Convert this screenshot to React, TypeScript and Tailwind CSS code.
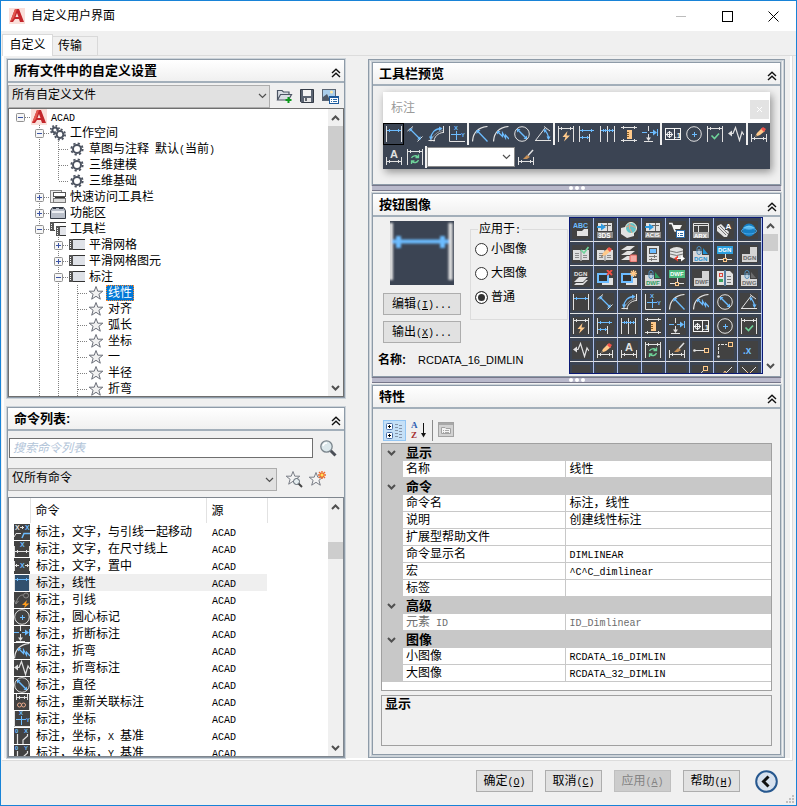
import React, { Fragment, type ReactNode } from "react";
import clsx from "clsx";

const W = "#e2e2e2";
const B = "#6cbcff";
const O = "#ffc98a";
const G = "#6fd49a";

const glyph = (x: number, y: number, s: string, fill: string, size = 6) => (
  <text x={x} y={y} fill={fill} stroke="none" fontSize={size} fontWeight="700" fontFamily="Liberation Sans, sans-serif">
    {s}
  </text>
);

const extLines = (
  <>
    <path d="M0.500 8V16M15.500 8V16" stroke={W} />
    <path d="M1 12.500H15M3.500 11V14M12.500 11V14" stroke={W} />
  </>
);

const topExtLines = <path d="M0.500 0V16M15.500 0V16M1 2.500H15M3.500 1V4M12.500 1V4" stroke={W} />;

const clip = (label: string, color: string) => (
  <>
    <path d="M0 5H9V9H16V16H0Z" fill="#d8d8d8" stroke="none" />
    <path d="M10 2L15 8H10Z" fill={color} stroke="none" />
    <rect x="4" y="0.500" width="4" height="8" rx="2" stroke="#4d8fc0" />
    <path d="M6 3V7" stroke="#9cc9ea" />
    {glyph(1, 15, label, color, 6)}
  </>
);

const net = (label: string, color: string) => (
  <>
    <rect x="0" y="0" width="16" height="8" fill={color} stroke="none" />
    {glyph(1, 6, label, "#fff", 6)}
    <path d="M8.500 8V12M1 13.500H15" stroke={W} />
    <rect x="6.500" y="12.500" width="3" height="3" fill="#444" stroke={O} />
  </>
);

const docIcon = (label: string) => (
  <>
    <path d="M9 1H16V16H1V8H9Z" fill="#d4d4d4" stroke="none" />
    {glyph(2, 14, label, "#666", 6)}
  </>
);

const book = (
  <>
    <path d="M0 4H7L8 5L9 4H16V14H9L8 15L7 14H0Z" fill="#dedede" stroke="none" />
    <path d="M8 5V14M2 7.500H6M2 9.500H6M2 11.500H6M10 9.500H14M10 11.500H14" stroke="#8a8a8a" />
  </>
);

const pencil = (
  <>
    <path d="M4 11L6 7L11 2L14 5L9 9Z" fill={O} stroke="none" />
    <path d="M10 3L12 1L15 3L13 6Z" fill="#f0524a" stroke="none" />
    <path d="M4 11L5 9L6.500 10Z" fill="#555" stroke="none" />
  </>
);

const icons: Record<string, ReactNode> = {
  linear: (
    <>
      <path d="M0.500 0V16M15.500 0V16" stroke={W} />
      <path d="M1 4.500H15M3.500 3V6M2.500 4V5M12.500 3V6M13.500 4V5" stroke={B} />
    </>
  ),
  aligned: (
    <>
      <path d="M0.500 5L6 0.500M10.500 15.500L15.500 10.500" stroke={W} />
      <path d="M3 3L13 13" stroke={B} strokeWidth="1.300" />
      <path d="M2.500 2.500H6L2.500 6ZM13.500 13.500H10L13.500 10Z" fill={B} />
    </>
  ),
  arc: (
    <>
      <path d="M6 15.500C6 11 10 7 15 6.500M0.500 14.500H7M15.500 0V7" stroke={W} />
      <path d="M3 15.500C3 11 10 4.500 16 4.500" stroke={W} opacity=".5" />
      <path d="M2.500 13.500C3 7 7 2.500 13.500 2.500" stroke={B} strokeWidth="1.300" />
      <path d="M1 10.500H5L2.500 14ZM11 0.500V5L14.500 2.500Z" fill={B} />
    </>
  ),
  ordinate: (
    <>
      <path d="M0.500 0V15.500H16" stroke={W} />
      <path d="M7.500 5V14M2 8.500H12" stroke={B} />
      {glyph(5, 4, "X", B, 6)}
      {glyph(12, 11, "Y", B, 6)}
    </>
  ),
  radius: (
    <>
      <path d="M0.500 15.500C1 7 6 1.500 15.500 0.500" stroke={W} strokeWidth="1.200" />
      <path d="M5 4.500L15.500 15.500" stroke={B} strokeWidth="1.300" />
      <path d="M4.500 4H8.500L4.500 8Z" fill={B} />
    </>
  ),
  jogged: (
    <>
      <path d="M0.500 15.500C1 7 6 1.500 15.500 0.500" stroke={W} strokeWidth="1.200" />
      <path d="M4.500 5.500L9.500 10.500V7L12.500 12V9L16 13" stroke={B} strokeWidth="1.200" />
      <path d="M4 5H7.500L4 8.500Z" fill={B} />
    </>
  ),
  diameter: (
    <>
      <circle cx="8" cy="8" r="7.300" stroke={W} />
      <path d="M3.500 3.500L12.500 12.500" stroke={B} strokeWidth="1.400" />
      <path d="M3 3H6.500L3 6.500ZM13 13H9.500L13 9.500Z" fill={B} />
    </>
  ),
  angular: (
    <>
      <path d="M9 0.500L15 5M0 14.500H16M10 2L0.500 14.500" stroke={W} />
      <path d="M9 4C12 6 13.500 9 13.500 13" stroke={B} strokeWidth="1.300" />
      <path d="M8.500 3.500H12L9.500 7ZM11.500 10.500H15.500L13.500 14Z" fill={B} />
    </>
  ),
  quick: (
    <>
      {topExtLines}
      <path d="M9.500 5L4.500 11H7.500L6 15.500L12 9.500H8.500Z" fill={O} stroke="none" />
    </>
  ),
  baseline: (
    <>
      <path d="M0.500 0V16M10.500 8V16" stroke={W} />
      <path d="M1 4.500H15M3.500 3V6M12.500 3V6M1 11.500H10M3.500 10V13M8.500 10V13" stroke={B} />
    </>
  ),
  cont: (
    <>
      <path d="M0.500 0V16M7.500 0V16M14.500 0V16" stroke={W} />
      <path d="M1 4.500H14M3.500 3V6M5.500 3V6M9.500 3V6M12.500 3V6" stroke={B} />
    </>
  ),
  space: (
    <>
      <path d="M0 1.500H16M0 14.500H16M2.500 0V3M13.500 0V3M2.500 13V16M13.500 13V16" stroke={W} />
      <rect x="6" y="4" width="5" height="9" fill={O} stroke="none" />
      <path d="M6 6.500H8M6 8.500H8M6 10.500H8" stroke="#8b5d20" />
    </>
  ),
  breaks: (
    <>
      <path d="M6.500 0V5M6.500 8V13M2 15.500H11" stroke={W} />
      <path d="M4 11.500H9L6.500 15Z" fill={W} />
      <path d="M0 6.500H5M8 6.500H12M15.500 3V10" stroke={B} />
      <path d="M11 3.500L15 6.500L11 9.500Z" fill={B} />
    </>
  ),
  tolerance: (
    <>
      <rect x="0.500" y="2.500" width="15" height="11" stroke="#f4f4f4" />
      <path d="M9.500 3V13M1 8.500H8" stroke="#f4f4f4" />
      <circle cx="4.500" cy="8.500" r="2.500" stroke="#f4f4f4" />
      <path d="M4.500 5V12" stroke="#f4f4f4" />
      {glyph(9.5, 12, ".1", "#f4f4f4", 8)}
    </>
  ),
  center: (
    <>
      <circle cx="8" cy="8" r="7.300" stroke={W} />
      <path d="M8.500 6V11M6 8.500H11" stroke={B} />
    </>
  ),
  inspect: (
    <>
      {topExtLines}
      <path d="M4.500 9.500L7.500 12.500L12 7.500" stroke={G} strokeWidth="1.600" />
    </>
  ),
  jogline: (
    <>
      <path d="M2 7.500H5L7.500 1.500L11.500 14.500L14 6L16 9" stroke={W} strokeWidth="1.200" />
      <path d="M4 4.500V10.500L0 7.500Z" fill={W} />
    </>
  ),
  edit: (
    <>
      {extLines}
      {pencil}
    </>
  ),
  textedit: (
    <>
      {extLines}
      {glyph(4, 9, "A", W, 11)}
    </>
  ),
  update: (
    <>
      {topExtLines}
      <path d="M4.500 9A4 4 0 0 1 11 8M11.500 11A4 4 0 0 1 5 12.500M11.500 5.500V8.500H8.500M4.500 15V12H7.500" stroke={G} strokeWidth="1.300" />
    </>
  ),
  style: (
    <>
      {extLines}
      <path d="M5 10L9 6L12 8L9 10Z" fill="#c79057" stroke="none" />
      <path d="M10 6.500L15 1" stroke={W} strokeWidth="1.500" />
    </>
  ),
  abc: (
    <>
      {glyph(0, 6, "ABC", B, 7)}
      <path d="M4 9H9L11 7H15V14H4Z" fill={W} stroke="none" />
    </>
  ),
  imp3ds: (
    <>
      <path d="M1 1H15V9H1Z" fill={W} stroke="none" />
      <path d="M7 3.500H14M10.500 1V9" stroke="#666" />
      <path d="M0 4H4V1.500L9 5L4 8.500V6H0Z" fill="#2f9be0" stroke="none" />
      <rect x="0" y="10" width="16" height="6" fill="#8a8a8a" stroke="none" />
      {glyph(1, 15.5, "3DS", "#fff", 6.5)}
    </>
  ),
  acis: (
    <>
      <path d="M1 1H15V9H1Z" fill={W} stroke="none" />
      <path d="M7 3.500H14M10.500 1V9" stroke="#666" />
      <path d="M0 4H4V1.500L9 5L4 8.500V6H0Z" fill="#2f9be0" stroke="none" />
      <rect x="0" y="10" width="16" height="6" fill="#8a8a8a" stroke="none" />
      {glyph(0.5, 15, "ACIS", "#fff", 6)}
    </>
  ),
  geo: (
    <>
      <path d="M0 6L8 4L13 8V14L6 16L0 12Z" fill={W} stroke="none" />
      <circle cx="10" cy="6" r="5.500" fill="#63c2c7" stroke="#f0efe0" />
      <path d="M5 5Q10 2 15 6M9 1Q7 6 11 11" stroke="#f0a080" />
    </>
  ),
  cart: (
    <>
      <path d="M0 1.500H3L6 9H11" stroke="#f4f4f4" strokeWidth="1.500" />
      <path d="M4 3H13L11 7H5Z" fill="#f4f4f4" stroke="none" />
      <rect x="7.500" y="8.500" width="8" height="7" fill="#fff" stroke="#2c6ba8" />
      <path d="M9 11.500H10M11 11.500H14M9 13.500H10M11 13.500H14" stroke="#2c6ba8" />
    </>
  ),
  arx: (
    <>
      <path d="M0.500 10V1.500H15.500V10M5.500 4V10M1 3.500H15" stroke={W} />
      <rect x="0" y="10" width="16" height="6" fill="#aaa" stroke="none" />
      {glyph(1, 15.5, "ARX", "#fff", 6)}
    </>
  ),
  pages: (
    <>
      <path d="M0 4L4 2L12 10L10 15H7L0 9Z" fill={W} stroke="none" />
      <path d="M1 5L9 13M3 4L11 12" stroke="#777" />
      <rect x="8" y="0" width="8" height="8" fill="#444" stroke="none" />
      {glyph(8.5, 7, "A", "#fff", 8)}
    </>
  ),
  web: (
    <>
      <circle cx="8" cy="8" r="6.500" fill="#177fc4" stroke="none" />
      <path d="M2 6Q8 1 14 6Q8 9 2 6" fill="#6cc8f4" stroke="none" />
      <ellipse cx="8" cy="9" rx="7.500" ry="3" stroke="#4aa8e8" />
    </>
  ),
  bookcheck: (
    <>
      {book}
      <path d="M8 4L11 7L15.500 1" stroke={G} strokeWidth="1.600" />
    </>
  ),
  bookedit: (
    <>
      {book}
      {pencil}
    </>
  ),
  books: (
    <>
      <path d="M0 4L6 0H14L9 4ZM0 9L6 5H14L9 9ZM0 14L6 10H12L9 14Z" fill={W} stroke="none" />
      <rect x="9" y="9" width="7" height="7" rx="1" fill="#f4a9a4" stroke="#e0605a" />
    </>
  ),
  control: (
    <>
      <path d="M2 0H14V16H2Z" fill={W} stroke="none" />
      <rect x="4.500" y="2.500" width="7" height="5" fill={B} stroke="#555" />
      <path d="M4 10.500H12M4 13.500H12M9.500 9V12M6.500 12V15" stroke="#777" />
    </>
  ),
  database: (
    <>
      <path d="M1 3Q8 -1 14 3V11Q8 15 1 11Z" fill={W} stroke="none" />
      <path d="M1 5Q8 8 14 5M1 8Q8 11 14 8" stroke="#777" />
      <path d="M5 12.500L9 9.500V15.500Z" fill="#ee4438" stroke="none" />
      <path d="M16 12.500L12 9.500V15.500Z" fill="#fff" stroke="none" />
      <path d="M8 12.500H13" stroke="#fff" />
    </>
  ),
  dgnclip: clip("DGN", "#1f92d4"),
  dgnnet: net("DGN", "#2c9fe0"),
  dgndoc: docIcon("DGN"),
  dgnsheets: (
    <>
      {glyph(1, 5.5, "DGN", W, 6)}
      <path d="M1 12L6 7H15L10 12Z" fill={W} stroke="none" />
      <path d="M1 15L3 13H10L13 10H15L10 15Z" fill={W} stroke="none" />
    </>
  ),
  imgx: (
    <>
      <path d="M5 8H16V15H5Z" fill={W} stroke="none" />
      <rect x="1" y="4" width="10" height="8" fill="#333" stroke={B} strokeWidth="2" />
      <path d="M10 0L15 5M15 0L10 5" stroke="#f04e44" strokeWidth="1.800" />
    </>
  ),
  imgnew: (
    <>
      <path d="M5 8H16V15H5Z" fill={W} stroke="none" />
      <rect x="1" y="4" width="10" height="8" fill="#333" stroke={B} strokeWidth="2" />
      <path d="M12.500 0V7M9 3.500H16M10 1L15 6M15 1L10 6" stroke={O} strokeWidth="1.300" />
    </>
  ),
  dwfclip: clip("DWF", "#2f9e5f"),
  dwfnet: net("DWF", "#4cba7e"),
  dwfdoc: docIcon("DWF"),
  compare: (
    <>
      <path d="M0 1H7V15H0ZM9 1H13L16 4V15H9Z" fill={W} stroke="none" />
      <path d="M8 0V16" stroke={B} />
      <rect x="2.500" y="3.500" width="3" height="3" stroke="#d84840" />
      <rect x="2" y="9" width="4" height="3" fill="#3aa060" stroke="none" />
      <path d="M10 6.500H14M10 9.500H14M10 12.500H14" stroke="#777" />
    </>
  ),
  dwgclip: clip("DWG", "#6c6c6c"),
  ptline: (
    <>
      <path d="M1 8.500H11" stroke={W} />
      <circle cx="1.500" cy="8.500" r="1.300" fill={W} stroke="none" />
      <rect x="11.500" y="6.500" width="4" height="4" stroke={O} />
    </>
  ),
  from: (
    <>
      <path d="M1.500 12V2.500H10" stroke={W} strokeDasharray="3 1" />
      <circle cx="1.500" cy="14.500" r="1.300" fill={W} stroke="none" />
      <rect x="11.500" y="0.500" width="4" height="4" stroke={O} />
    </>
  ),
  dotx: glyph(2, 12, ".x", B, 10),
  fy: glyph(2, 13, ".Y", B, 8),
  fz: glyph(2, 13, ".Z", B, 8),
  fxy: glyph(0, 13, ".XY", B, 8),
  fxz: glyph(0, 13, ".XZ", B, 8),
  fyz: glyph(0, 13, ".YZ", B, 8),
  endp: (
    <>
      <path d="M1 15L10 5" stroke={W} />
      <rect x="10.500" y="0.500" width="4" height="4" stroke={O} />
    </>
  ),
  midp: (
    <>
      <path d="M1 15L15 1" stroke={W} />
      <path d="M4.500 10.500H11.500L8 5Z" stroke={O} />
    </>
  ),
  inter: (
    <>
      <path d="M1 1L15 15M15 1L1 15" stroke={W} />
      <path d="M5 5L11 11M11 5L5 11" stroke={O} />
    </>
  ),
  moveText: (
    <>
      {glyph(1, 6, "X", W, 7)}
      {glyph(11, 6, "X", B, 7)}
      <path d="M6 3.500H10M8.500 2V5M0 13L2 9.500H7" stroke={W} />
      <path d="M8 14L10 9.500H16" stroke={B} strokeWidth="1.500" />
    </>
  ),
  aboveText: (
    <>
      {glyph(6, 6, "X", B, 7)}
      <path d="M0.500 5V16M15.500 5V16M1 10.500H15M3.500 9V12M12.500 9V12" stroke={W} />
    </>
  ),
  centerText: (
    <>
      {glyph(6, 10, "X", B, 7)}
      <path d="M0.500 3V13M15.500 3V13M1 7.500H5M11 7.500H15M2.500 6V9M13.500 6V9" stroke={W} />
    </>
  ),
  leader: (
    <>
      <circle cx="12" cy="3.500" r="2.500" stroke="#8a8a8a" />
      <path d="M2 12C3 7 5 3 9 3M0 8L2 12L4.500 9" stroke="#8a8a8a" />
      <path d="M13 8L8 13H11L10 16L15.500 11.500H12Z" fill="#ff9d1c" stroke="none" />
    </>
  ),
  reassoc: (
    <>
      <path d="M2.500 0V6M13.500 0V6M15.500 0V16M3 3.500H13M5.500 2V5M10.500 2V5" stroke={W} />
      <circle cx="5.500" cy="11" r="2" stroke="#e8a98a" />
      <circle cx="9.500" cy="11" r="2" stroke="#e8a98a" />
    </>
  ),
  ordX: (
    <>
      {glyph(1, 5, "0", B, 6)}
      {glyph(10, 5, "X", B, 6)}
      <path d="M3.500 6V16M13.500 6V8L9 12V16" stroke={W} strokeWidth="1.200" />
    </>
  ),
  ordY: (
    <>
      {glyph(1, 5, "0", B, 6)}
      {glyph(10, 5, "Y", B, 6)}
      <path d="M3.500 6V16M13.500 6V8L9 12V16" stroke={W} strokeWidth="1.200" />
    </>
  ),
};

const Icon = ({ name }: { name: string }) => (
  <svg width="16" height="16" viewBox="0 0 16 16" fill="none" aria-hidden="true" className="block shrink-0">
    {icons[name]}
  </svg>
);

const Mix = ({ children }: { children: string }) => (
  <>
    {children.split(/([\x20-\x7e]+)/).map((part, i) =>
      i % 2 ? (
        <span key={i} className="font-['Liberation_Mono',monospace] text-[10px] leading-none whitespace-pre">
          {part}
        </span>
      ) : (
        <Fragment key={i}>{part}</Fragment>
      ),
    )}
  </>
);

const Logo = () => (
  <svg width="16" height="16" viewBox="0 0 16 16" aria-hidden="true" className="block shrink-0">
    <rect width="16" height="16" fill="#fadfda" />
    <path d="M1 14L6 1H10L15 14H11L10 11H6L4 14Z" fill="#c3262b" />
    <path d="M6 1H8L5 10L1 14Z" fill="#e4584f" />
    <path d="M8 5L9.500 9H6.500Z" fill="#fadfda" />
  </svg>
);

const Chevron = ({ dir = "down", bold = false }: { dir?: "down" | "up"; bold?: boolean }) => (
  <svg width="9" height="6" viewBox="0 0 9 6" fill="none" stroke="#505050" strokeWidth={bold ? 2 : 1.2} aria-hidden="true" className="pointer-events-none block">
    <path d={dir === "down" ? "M1 1L4.500 4.500L8 1" : "M1 5L4.500 1.500L8 5"} />
  </svg>
);

const ScrollBar = ({ thumb, height }: { thumb: string; height?: string }) => (
  <div className={clsx("flex w-[15px] shrink-0 flex-col items-center bg-[#f0f0f0]", height)} aria-hidden="true">
    <div className="flex h-[17px] shrink-0 items-center">
      <Chevron dir="up" bold />
    </div>
    <div className={clsx("w-full bg-[#cdcdcd]", thumb)} />
    <div className="flex-1" />
    <div className="flex h-[17px] shrink-0 items-center">
      <Chevron bold />
    </div>
  </div>
);

const Panel = ({ title, children, className }: { title: string; children: ReactNode; className?: string }) => (
  <section className={clsx("flex min-w-0 flex-col border border-[#8e9ba8] shadow-[0_0_0_1px_#ccd3d9]", className)}>
    <header className="flex h-[23px] shrink-0 items-center justify-between border-b-2 border-[#a3afba] bg-linear-to-b from-white to-[#f0f0f0] pr-[3px] pl-[6px]">
      <h2 className="text-[13px] leading-4 font-bold">{title}</h2>
      <button type="button" aria-label="折叠" className="pt-1">
        <svg width="10" height="10" viewBox="0 0 10 10" fill="none" stroke="#111" strokeWidth="1.400" className="block">
          <path d="M1 5L5 1.200L9 5M1 9L5 5.200L9 9" />
        </svg>
      </button>
    </header>
    {children}
  </section>
);

const Combo = ({ label, value, className }: { label: string; value: string; className?: string }) => (
  <div className={clsx("grid items-center", className)}>
    <select
      aria-label={label}
      className="col-start-1 row-start-1 h-[23px] w-full appearance-none border border-[#adadad] bg-[#e1e1e1] pb-[3px] pl-[3px] text-[12px] leading-4"
    >
      <option>{value}</option>
    </select>
    <span className="pointer-events-none col-start-1 row-start-1 mr-[3px] justify-self-end">
      <Chevron />
    </span>
  </div>
);

const PushButton = ({ text, accel, tail = "", disabled, className }: { text: string; accel: string; tail?: string; disabled?: boolean; className?: string }) => (
  <button
    type="button"
    disabled={disabled}
    className={clsx(
      "h-[22px] border text-[12px] leading-4 whitespace-nowrap",
      disabled ? "border-[#bfbfbf] bg-[#cccccc] text-[#838383]" : "border-[#adadad] bg-[#e1e1e1]",
      className,
    )}
  >
    {text}
    <span className="font-['Liberation_Mono',monospace] text-[10px] leading-none">
      (<u>{accel}</u>){tail}
    </span>
  </button>
);

/* ---------- customization tree ---------- */

type TreeRow = {
  label: string;
  /* one character per ancestor column: "|" continues a branch, "." leaves it blank */
  guides: string;
  node: "open" | "closed" | "leaf" | "last";
  icon: string;
  root?: boolean;
  selected?: boolean;
};

const tree: TreeRow[] = [
  { label: "ACAD", guides: "", node: "open", icon: "logo", root: true },
  { label: "工作空间", guides: ".", node: "open", icon: "gears" },
  { label: "草图与注释 默认(当前)", guides: ".|", node: "leaf", icon: "gear" },
  { label: "三维建模", guides: ".|", node: "leaf", icon: "gear" },
  { label: "三维基础", guides: ".|", node: "last", icon: "gear" },
  { label: "快速访问工具栏", guides: ".", node: "closed", icon: "quickbar" },
  { label: "功能区", guides: ".", node: "closed", icon: "ribbon" },
  { label: "工具栏", guides: ".", node: "open", icon: "toolbars" },
  { label: "平滑网格", guides: ".|", node: "closed", icon: "toolbar" },
  { label: "平滑网格图元", guides: ".|", node: "closed", icon: "toolbar" },
  { label: "标注", guides: ".|", node: "open", icon: "toolbar" },
  { label: "线性", guides: ".||", node: "leaf", icon: "star", selected: true },
  { label: "对齐", guides: ".||", node: "leaf", icon: "star" },
  { label: "弧长", guides: ".||", node: "leaf", icon: "star" },
  { label: "坐标", guides: ".||", node: "leaf", icon: "star" },
  { label: "一", guides: ".||", node: "leaf", icon: "star" },
  { label: "半径", guides: ".||", node: "leaf", icon: "star" },
  { label: "折弯", guides: ".||", node: "leaf", icon: "star" },
];

const gear = (cx: number, cy: number, r: number) => (
  <g fill="none" stroke="#4c5360">
    <circle cx={cx} cy={cy} r={r} strokeWidth="2" />
    <circle cx={cx} cy={cy} r={r + 1.7} strokeWidth="1.800" strokeDasharray={`${(r + 1.7) * 0.3927} ${(r + 1.7) * 0.3927}`} />
  </g>
);

const starPath = "M8 1.500L9.800 6.200H14.800L10.900 9.300L12.300 14.200L8 11.300L3.700 14.200L5.100 9.300L1.200 6.200H6.200Z";

const treeIcons: Record<string, ReactNode> = {
  gears: (
    <>
      {gear(5, 5, 2.6)}
      <circle cx="10" cy="9.500" r="5" fill="#fff" />
      {gear(10, 9.5, 3.4)}
    </>
  ),
  gear: gear(8, 8, 4),
  quickbar: (
    <>
      <rect x="0.500" y="1.500" width="11" height="12" fill="#eee" stroke="#888" />
      <rect x="3.500" y="3.500" width="12" height="4" fill="#fff" stroke="#555" />
      <rect x="3.500" y="9.500" width="12" height="4" fill="#ddd" stroke="#777" />
      <path d="M5 8.500H15" stroke="#333" />
    </>
  ),
  ribbon: (
    <>
      <path d="M0.500 5.500L2.500 2.500H13.500L15.500 5.500V13.500H0.500Z" fill="#b9bfca" stroke="#343b46" />
      <path d="M3 2H6V4H3ZM9 2H13V4H9Z" fill="#343b46" />
      <path d="M2 7H14" stroke="#eef0f4" strokeWidth="2" />
    </>
  ),
  toolbars: (
    <>
      <path d="M16 1.500H0.500V9.500H5M3.500 2V9" fill="none" stroke="#3a3a3a" />
      <rect x="0" y="1" width="4" height="9" fill="#555" />
      <rect x="6" y="5" width="10" height="10" fill="#e3e5ea" />
      <path d="M16 5.500H6M16 14.500H6" stroke="#333" />
      <rect x="6" y="5" width="4" height="10" fill="#555" />
      <path d="M1.500 3V9M7.500 7V14" stroke="#eee" strokeDasharray="1 1" />
    </>
  ),
  toolbar: (
    <>
      <rect x="0" y="2" width="16" height="11" fill="#dfe2e8" />
      <path d="M0 2.500H16M0 12.500H16" stroke="#333" />
      <rect x="0" y="2" width="4" height="11" fill="#555" />
      <path d="M1.500 4V12" stroke="#fff" strokeDasharray="1 1" />
    </>
  ),
  star: <path d={starPath} fill="#f1f1f1" stroke="#6a6e78" />,
};

const Guide = ({ kind }: { kind: string }) => (
  <svg width="19" height="16" viewBox="0 0 19 16" className="block shrink-0" aria-hidden="true">
    {kind === "|" && <path d="M9.500 0V16" stroke="#808080" strokeDasharray="1 1" />}
  </svg>
);

/* The leftmost column carries the root's own box, so child branches start one column in. */
const TreeNode = ({ row }: { row: TreeRow }) => {
  const box = row.node === "open" || row.node === "closed";
  return (
    <svg width="19" height="16" viewBox="0 0 19 16" className="block shrink-0" aria-hidden="true">
      {!row.root && <path d={row.node === "last" ? "M9.500 0V8" : "M9.500 0V16"} stroke="#808080" strokeDasharray="1 1" />}
      <path d="M10 8.500H19" stroke="#808080" strokeDasharray="1 1" />
      {box && (
        <>
          <rect x="5.500" y="4.500" width="8" height="8" rx="1" fill="#f6f6f6" stroke="#919191" />
          <path d={row.node === "open" ? "M7 8.500H12" : "M7 8.500H12M9.500 6V11"} stroke="#3b53a4" />
        </>
      )}
    </svg>
  );
};

const Tree = () => (
  <ul className="min-w-0 flex-1 overflow-hidden pl-[2px]">
    {tree.map((row) => (
      <li key={row.label} className="flex h-4 items-center">
        {row.guides.split("").map((kind, i) => (
          <Guide key={i} kind={kind} />
        ))}
        <TreeNode row={row} />
        <span className="flex w-[19px] shrink-0 pl-px">
          {row.icon === "logo" ? (
            <Logo />
          ) : (
            <svg width="16" height="16" viewBox="0 0 16 16" className="block" aria-hidden="true">
              {treeIcons[row.icon]}
            </svg>
          )}
        </span>
        <span
          className={clsx(
            "h-4 border px-px text-[12px] leading-[14px] whitespace-nowrap",
            row.selected ? "border-dotted border-[#ff8728] bg-[#0078d7] text-white" : "border-transparent",
          )}
        >
          <Mix>{row.label}</Mix>
        </span>
      </li>
    ))}
  </ul>
);

/* ---------- command list ---------- */

const commands: [string, string][] = [
  ["moveText", "标注，文字，与引线一起移动"],
  ["aboveText", "标注，文字，在尺寸线上"],
  ["centerText", "标注，文字，置中"],
  ["linear", "标注，线性"],
  ["leader", "标注，引线"],
  ["center", "标注，圆心标记"],
  ["breaks", "标注，折断标注"],
  ["jogged", "标注，折弯"],
  ["jogline", "标注，折弯标注"],
  ["diameter", "标注，直径"],
  ["reassoc", "标注，重新关联标注"],
  ["ordinate", "标注，坐标"],
  ["ordX", "标注，坐标，X 基准"],
  ["ordY", "标注，坐标，Y 基准"],
];

const CommandTable = () => (
  <div className="min-w-0 flex-1 overflow-hidden">
    <table className="w-[258px] table-fixed border-collapse text-[12px] leading-4">
      <colgroup>
        <col className="w-[21px]" />
        <col className="w-[176px]" />
        <col className="w-[61px]" />
      </colgroup>
      <thead>
        <tr className="h-[25px]">
          <td className="border-r border-[#e2e2e2]" />
          <th className="border-r border-[#e2e2e2] pl-[5px] text-left font-normal">命令</th>
          <th className="border-r border-[#e2e2e2] pl-[5px] text-left font-normal">源</th>
        </tr>
      </thead>
      <tbody>
        {commands.map(([icon, label]) => {
          const selected = label === "标注，线性";
          return (
            <tr key={label} className="h-[17px]">
              <td className="p-0 pl-[5px]">
                <div className={selected ? "w-4 bg-[#31506e]" : "w-4 bg-[#424242]"}>
                  <Icon name={icon} />
                </div>
              </td>
              <td className={clsx("p-0 pl-[6px] whitespace-nowrap", selected && "bg-[#efefef]")}>
                <Mix>{label}</Mix>
              </td>
              <td className={clsx("p-0 pl-[6px]", selected && "bg-[#efefef]")}>
                <Mix>ACAD</Mix>
              </td>
            </tr>
          );
        })}
      </tbody>
    </table>
  </div>
);

/* ---------- toolbar preview and image grid ---------- */

const previewTools = [
  "linear", "aligned", "arc", "ordinate", "|",
  "radius", "jogged", "diameter", "angular", "|",
  "quick", "baseline", "cont", "space", "breaks", "|",
  "tolerance", "center", "inspect", "jogline", "|",
  "edit", "textedit", "update", "|", "select", "style",
];

const imageCells = [
  "abc", "imp3ds", "geo", "acis", "cart", "arx", "pages", "web",
  "bookcheck", "bookedit", "books", "control", "database", "dgnclip", "dgnnet", "dgndoc",
  "dgnsheets", "imgx", "imgnew", "dwfclip", "dwfnet", "dwfdoc", "compare", "dwgclip",
  "linear", "aligned", "arc", "ordinate", "radius", "jogged", "diameter", "angular",
  "quick", "baseline", "cont", "space", "breaks", "tolerance", "center", "inspect",
  "jogline", "edit", "textedit", "update", "style", "ptline", "from", "dotx",
  "fy", "fz", "fxy", "fxz", "fyz", "endp", "midp", "inter",
];

const ToolbarPreview = () => (
  <div className="px-[10px] pt-[6px] pb-[15px]">
    <div className="bg-white shadow-[2px_3px_8px_rgba(0,0,0,0.4)]">
      <div className="flex h-[31px] items-center justify-between pr-px pl-2">
        <span className="text-[12px] text-[#9a9a9a]">标注</span>
        <button type="button" aria-label="关闭" className="mt-1 flex size-[19px] items-center justify-center bg-[#e3e3e3] text-white">
          <svg width="7" height="7" viewBox="0 0 7 7" stroke="currentColor" aria-hidden="true">
            <path d="M1 1L6 6M6 1L1 6" />
          </svg>
        </button>
      </div>
      <div className="flex flex-wrap gap-y-px bg-[#3b4453] pb-px">
        {previewTools.map((tool, i) => {
          if (tool === "|") return <span key={i} className="h-[22px] w-[2px] bg-[#f0f0f0]" />;
          if (tool === "select")
            return (
              <div key={i} className="grid h-[22px] w-[88px] items-center">
                <select aria-label="标注样式" className="col-start-1 row-start-1 h-[20px] w-full appearance-none border border-[#8a8a8a] bg-white" />
                <span className="pointer-events-none col-start-1 row-start-1 mr-1 justify-self-end">
                  <Chevron />
                </span>
              </div>
            );
          return (
            <button
              key={i}
              type="button"
              aria-label={tool}
              className={clsx("h-[22px] w-[21px] p-[3px]", i === 0 && "outline outline-1 -outline-offset-1 outline-black")}
            >
              <Icon name={tool} />
            </button>
          );
        })}
      </div>
    </div>
  </div>
);

const Splitter = () => (
  <div className="h-[8px] shrink-0" role="separator">
    <div className="flex h-[6px] items-center justify-center gap-[2px] border-y border-[#77778a] bg-[#b9b9cb]">
      <i className="size-1 rounded-full bg-white" />
      <i className="size-1 rounded-full bg-white" />
      <i className="size-1 rounded-full bg-white" />
    </div>
  </div>
);

const ButtonImage = () => (
  <div className="flex min-h-0 flex-1 pr-[2px]">
    <div className="flex min-w-0 flex-1 flex-col">
      <div className="flex gap-2 pt-1">
        <div className="flex w-[89px] shrink-0 flex-col gap-[6px] pl-[10px]">
          <svg width="64" height="64" viewBox="0 0 64 64" className="mb-[2px] ml-[7px]" aria-label="线性">
            <defs>
              <filter id="soft">
                <feGaussianBlur stdDeviation="0.800" />
              </filter>
            </defs>
            <rect width="64" height="64" fill="#3b4453" />
            <g filter="url(#soft)">
              <path d="M1 2V59M60.500 2V59" stroke="#e2e2e2" strokeWidth="4" />
              <path d="M2 20.500H59" stroke="#6cbcff" strokeWidth="4" />
              <path d="M8.500 15V27M52.500 15V27" stroke="#6cbcff" strokeWidth="5" />
            </g>
          </svg>
          <PushButton text="编辑" accel="I" tail="..." className="w-[78px]" />
          <PushButton text="输出" accel="X" tail="..." className="w-[78px]" />
        </div>
        <fieldset className="h-[99px] min-w-0 flex-1 border border-[#dcdcdc] pl-1 text-[12px] leading-4">
          <legend className="ml-[3px] px-px">
            <Mix>应用于:</Mix>
          </legend>
          {["小图像", "大图像", "普通"].map((label) => (
            <label key={label} className="flex h-6 items-center gap-[3px]">
              <input
                type="radio"
                name="size"
                defaultChecked={label === "普通"}
                className="size-[13px] appearance-none rounded-full border border-[#333] bg-white checked:bg-[#333] checked:shadow-[inset_0_0_0_2px_white]"
              />
              {label}
            </label>
          ))}
        </fieldset>
      </div>
      <p className="mt-[9px] flex gap-[12px] pl-[5px] text-[12px] leading-4">
        <b>名称:</b>
        <span className="font-['Liberation_Sans',sans-serif] text-[11px]">RCDATA_16_DIMLIN</span>
      </p>
    </div>
    <div className="ml-px h-[157px] w-[194px] shrink-0 overflow-hidden border border-[#0b1a75]">
      <div className="grid grid-cols-8">
        {imageCells.map((name) => (
          <button key={name} type="button" aria-label={name} className="h-[24px] border-r border-b border-r-[#a9bdea] border-b-[#e4e4e4] bg-[#3b4453] p-[2px]">
            <span className="block size-[18px] bg-[#424242] p-px">
              <Icon name={name} />
            </span>
          </button>
        ))}
      </div>
    </div>
    <ScrollBar thumb="h-[17px]" height="h-[157px]" />
  </div>
);

/* ---------- properties ---------- */

const groups: { title: string; rows: [string, string][]; dim?: boolean }[] = [
  { title: "显示", rows: [["名称", "线性"]] },
  {
    title: "命令",
    rows: [
      ["命令名", "标注，线性"],
      ["说明", "创建线性标注"],
      ["扩展型帮助文件", ""],
      ["命令显示名", "DIMLINEAR"],
      ["宏", "^C^C_dimlinear"],
      ["标签", ""],
    ],
  },
  { title: "高级", rows: [["元素 ID", "ID_Dimlinear"]], dim: true },
  {
    title: "图像",
    rows: [
      ["小图像", "RCDATA_16_DIMLIN"],
      ["大图像", "RCDATA_32_DIMLIN"],
    ],
  },
];

const Properties = () => (
  <div className="flex flex-1 flex-col px-2 pt-[10px] pb-2">
    <div className="flex h-[22px] items-center gap-[5px] pl-[2px]">
      <button type="button" aria-label="按分类" className="flex h-[21px] w-[23px] items-center justify-center border border-[#92c5f3] bg-[#c5e0f7]">
        <svg width="17" height="17" viewBox="0 0 17 17" fill="none" aria-hidden="true">
          <rect x="0.500" y="1.500" width="6" height="6" rx="1" fill="#fff" stroke="#4a6fa8" />
          <rect x="0.500" y="10.500" width="6" height="6" rx="1" fill="#fff" stroke="#4a6fa8" />
          <path d="M2 4.500H5M3.500 3V6M2 13.500H5M3.500 12V15" stroke="#000" />
          <path d="M9 2.500H12M9 5.500H12M9 8.500H12M9 11.500H12M9 14.500H12M13 3.500H16M13 6.500H16M13 9.500H16M13 12.500H16M13 15.500H16" stroke="#8593a8" />
        </svg>
      </button>
      <button type="button" aria-label="按字母" className="w-[16px]">
        <svg width="16" height="18" viewBox="0 0 16 18" fill="none" aria-hidden="true" className="block">
          <text x="0" y="7" fontSize="9" fontWeight="700" fontFamily="Liberation Serif, serif" fill="#2b5db0">A</text>
          <text x="0" y="17" fontSize="9" fontWeight="700" fontFamily="Liberation Serif, serif" fill="#a52f2f">Z</text>
          <path d="M12.500 2V13" stroke="#111" />
          <path d="M10 12H15L12.500 16.500Z" fill="#111" />
        </svg>
      </button>
      <span className="h-[21px] w-px bg-[#8a8a8a]" />
      <button type="button" aria-label="属性页" disabled>
        <svg width="16" height="16" viewBox="0 0 16 16" fill="none" aria-hidden="true" className="block">
          <rect x="0.500" y="0.500" width="15" height="14" fill="#d2d2d2" stroke="#a2a2a2" />
          <path d="M1 2H15" stroke="#a8a8a8" strokeWidth="2" />
          <path d="M3.500 11.500V5.500H7L8 6.500H12.500V11.500Z" fill="#f3f3f3" stroke="#a2a2a2" />
          <path d="M5 8.500H6M7 8.500H11M5 10.500H6M7 10.500H11" stroke="#a8a8a8" />
        </svg>
      </button>
    </div>
    <div className="mt-[2px] border border-[#a0a0a0] bg-white pb-2">
      <table className="w-full table-fixed border-separate border-spacing-0 text-[12px] leading-4">
        <colgroup>
          <col className="w-[21px]" />
          <col className="w-[42%]" />
          <col />
        </colgroup>
        {groups.map((group) => (
          <tbody key={group.title}>
            <tr className="h-[17px] bg-[#c8c8c8]">
              <td className="p-0 pl-[5px]">
                <Chevron bold />
              </td>
              <th colSpan={2} className="p-0 pl-[3px] text-left text-[13px] font-bold">
                {group.title}
              </th>
            </tr>
            {group.rows.map(([name, value]) => (
              <tr key={name} className={clsx("h-[17px]", group.dim && "text-[#6d6d6d]")}>
                <td className="bg-[#c8c8c8] p-0" />
                <td className="border-r border-b border-[#c8c8c8] p-0 pl-[3px]">
                  <Mix>{name}</Mix>
                </td>
                <td className="border-b border-[#c8c8c8] p-0 pl-[3px]">
                  <Mix>{value}</Mix>
                </td>
              </tr>
            ))}
          </tbody>
        ))}
      </table>
    </div>
    <div className="mt-1 min-h-[50px] flex-1 border border-[#a0a0a0] pl-[3px] text-[13px] leading-4">
      <b>显示</b>
    </div>
  </div>
);

const IconButton = ({ label, children }: { label: string; children: ReactNode }) => (
  <button type="button" aria-label={label}>
    <svg width="17" height="17" viewBox="0 0 17 17" fill="none" aria-hidden="true" className="block">
      {children}
    </svg>
  </button>
);

export default function App() {
  return (
    <main className="relative flex min-h-screen w-full flex-col border border-[#1883d7] bg-[#f0f0f0] font-['Liberation_Sans','Noto_Sans_CJK_SC',sans-serif] text-black">
      <div className="flex h-[30px] shrink-0 items-center bg-white pl-2">
        <Logo />
        <h1 className="flex-1 pl-[6px] text-[12px] leading-4">自定义用户界面</h1>
        <button type="button" aria-label="最小化" disabled className="flex w-[46px] justify-center">
          <svg width="10" height="10" stroke="#bcbcbc"><path d="M0 5.500H10" /></svg>
        </button>
        <button type="button" aria-label="最大化" className="flex w-[46px] justify-center">
          <svg width="11" height="11" fill="none" stroke="#000"><rect x="0.500" y="0.500" width="10" height="10" /></svg>
        </button>
        <button type="button" aria-label="关闭窗口" className="flex w-[46px] justify-center">
          <svg width="11" height="11" stroke="#000"><path d="M0.500 0.500L10.500 10.500M10.500 0.500L0.500 10.500" /></svg>
        </button>
      </div>

      <div className="flex h-[25px] shrink-0 items-end pl-px text-[12px] leading-4" role="tablist">
        <button type="button" role="tab" aria-selected="true" className="h-[22px] w-[51px] border border-b-0 border-[#d9d9d9] bg-white pb-[2px]">
          自定义
        </button>
        <button type="button" role="tab" aria-selected="false" className="h-[20px] w-[45px] border border-l-0 border-[#d9d9d9] pr-[10px]">
          传输
        </button>
        <span className="flex-1 border-b border-[#dcdcdc]" />
      </div>

      <div className="mr-[3px] ml-px flex flex-1 border-r border-b border-[#dcdcdc]">
        <div className="grid flex-1 grid-cols-[338fr_417fr] gap-[23px] border-x-2 border-b-2 border-white pt-[3px] pr-[5px] pl-[3px]">
          <div className="flex min-w-0 flex-col gap-[9px]">
            <Panel title="所有文件中的自定义设置">
              <div className="flex h-[25px] items-center gap-[6px] pt-px pr-[5px]">
                <Combo label="自定义文件" value="所有自定义文件" className="min-w-0 flex-1" />
                <IconButton label="打开">
                  <path d="M1.500 12V2.500H6L7.500 4H13V6.500M1.500 12L4.500 6.500H15.500L12.500 12Z" stroke="#4c5564" strokeWidth="1.200" fill="#d9dde4" />
                  <path d="M12.500 9V15M9.500 12H15.500" stroke="#0c9a1c" strokeWidth="2" />
                </IconButton>
                <IconButton label="保存">
                  <path d="M1.500 1.500H14.500V14.500H2.500L1.500 13.500Z" fill="#5b6472" stroke="#343b46" />
                  <rect x="4" y="2" width="8" height="6" fill="#f4f4f4" />
                  <rect x="5" y="10" width="7" height="4" fill="#e8e8e8" />
                  <path d="M7 10V13" stroke="#343b46" strokeWidth="1.500" />
                </IconButton>
                <IconButton label="图像管理器">
                  <rect x="0.500" y="1.500" width="13" height="11" fill="#a9cdea" stroke="#5a6472" />
                  <path d="M1 9L5 6L8 12H1Z" fill="#4d5765" />
                  <circle cx="9.500" cy="4" r="1.500" fill="#ffe9a8" />
                  <rect x="7.500" y="8.500" width="9" height="7" fill="#fff" stroke="#1d5a9c" />
                  <path d="M8 9H16" stroke="#1d5a9c" strokeWidth="2" />
                  <path d="M9 11.500H10M11 11.500H15M9 13.500H10M11 13.500H15" stroke="#2c6ba8" />
                </IconButton>
              </div>
              <div className="flex h-[289px] border border-[#6f6f6f] bg-white">
                <Tree />
                <ScrollBar thumb="h-[44px]" />
              </div>
            </Panel>

            <Panel title="命令列表:" className="flex-1">
              <div className="flex items-center gap-[7px] pt-[7px] pr-[7px] pl-px">
                <input
                  type="text"
                  aria-label="搜索命令列表"
                  placeholder="搜索命令列表"
                  className="h-[20px] min-w-0 flex-1 border border-[#6f6f6f] bg-white px-[3px] text-[12px] italic placeholder:text-[#b3c5d9]"
                />
                <IconButton label="搜索">
                  <path d="M10.500 10.500L15.500 15.500" stroke="#4b4f57" strokeWidth="3" />
                  <circle cx="6.500" cy="6.500" r="5.700" fill="#dce8ec" stroke="#7b858c" strokeWidth="1.300" />
                  <path d="M3 6Q4 3 7 3" stroke="#fff" strokeWidth="1.500" />
                </IconButton>
              </div>
              <div className="flex items-center gap-[6px] pt-[10px] pr-[18px]">
                <Combo label="命令类别" value="仅所有命令" className="mr-[3px] min-w-0 flex-1" />
                <IconButton label="查找命令">
                  <g transform="translate(-1 -1)"><path d={starPath} fill="#f4f4f4" stroke="#7a7e87" /></g>
                  <path d="M12.500 12.500L16 16" stroke="#444" strokeWidth="2" />
                  <circle cx="10.500" cy="10.500" r="3" fill="#e6eef0" stroke="#5d6670" />
                </IconButton>
                <IconButton label="创建新命令">
                  <g transform="translate(-1 0)"><path d={starPath} fill="#f4f4f4" stroke="#7a7e87" /></g>
                  <path d="M13 0V8M9 4H17M10 1L16 7M16 1L10 7" stroke="#ef6a2a" strokeWidth="1.400" />
                  <circle cx="13" cy="4" r="1.500" fill="#ffe35c" />
                </IconButton>
              </div>
              <div className="mt-[6px] flex h-[260px] border border-[#7f868e] bg-white">
                <CommandTable />
                <ScrollBar thumb="mt-[27px] h-[17px]" />
              </div>
            </Panel>
          </div>

          <div className="flex min-w-0 flex-col border border-[#8e9ba8] px-[3px] py-[2px] shadow-[inset_0_0_0_1px_#ccd3d9]">
            <Panel title="工具栏预览">
              <ToolbarPreview />
            </Panel>
            <Splitter />
            <Panel title="按钮图像" className="h-[184px]">
              <ButtonImage />
            </Panel>
            <Splitter />
            <Panel title="特性" className="flex-1">
              <Properties />
            </Panel>
          </div>
        </div>
      </div>

      <footer className="flex h-[44px] shrink-0 items-center justify-end gap-[12px] pr-[18px] pb-1">
        <PushButton text="确定" accel="O" className="w-[57px]" />
        <PushButton text="取消" accel="C" className="w-[57px]" />
        <PushButton text="应用" accel="A" disabled className="w-[57px]" />
        <PushButton text="帮助" accel="H" className="w-[57px]" />
        <button type="button" aria-label="收起" className="ml-[3px]">
          <svg width="23" height="23" viewBox="0 0 23 23" fill="none" className="block" aria-hidden="true">
            <circle cx="11.500" cy="11.500" r="10.300" fill="#d7e1ee" stroke="#27588f" strokeWidth="2" />
            <path d="M13.500 6.500L8.500 11.500L13.500 16.500" stroke="#101010" strokeWidth="3" />
          </svg>
        </button>
      </footer>
      <svg width="8" height="8" fill="#bfbfbf" aria-hidden="true" className="absolute right-[2px] bottom-[2px]">
        <path d="M6 0H8V2H6ZM6 3H8V5H6ZM6 6H8V8H6ZM3 3H5V5H3ZM3 6H5V8H3ZM0 6H2V8H0Z" />
      </svg>
    </main>
  );
}
